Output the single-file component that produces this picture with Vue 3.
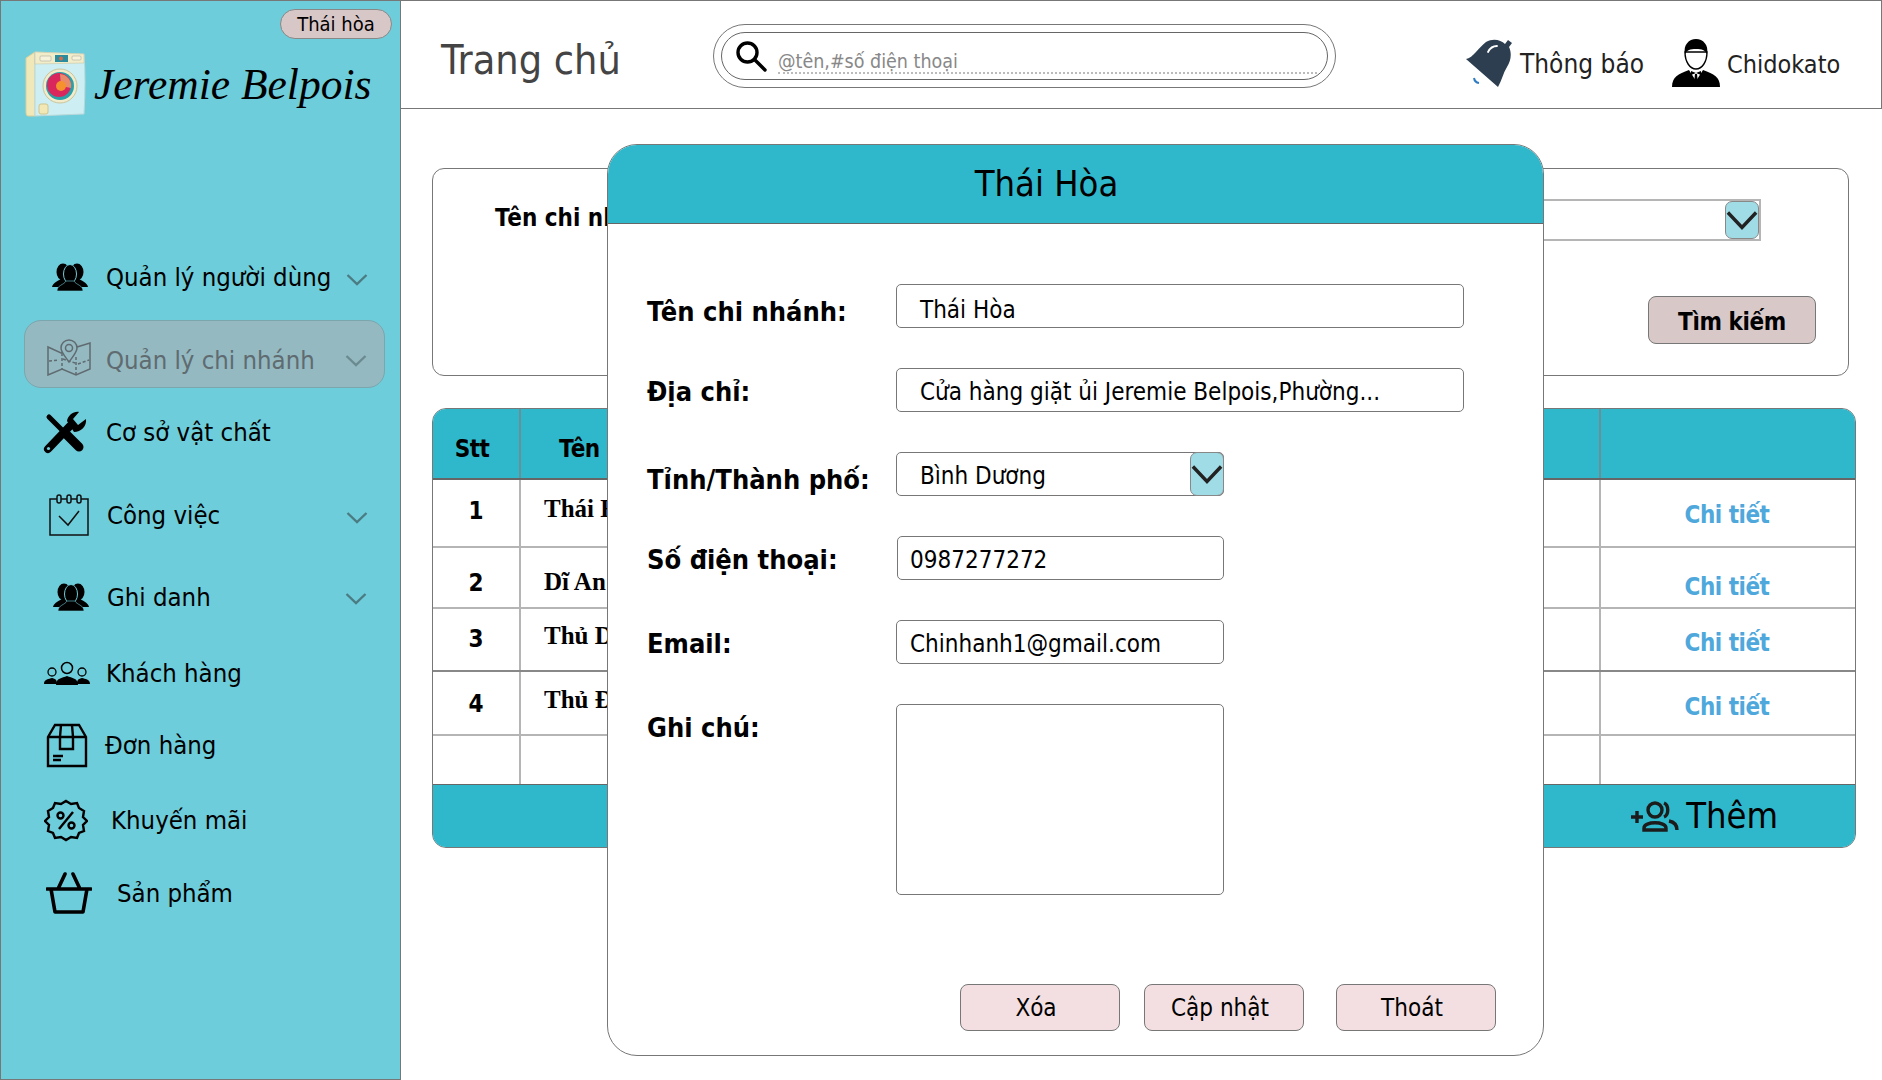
<template>
  <div class="page">
    <aside class="sidebar">
      <div class="pill-row"><span class="branch-pill">Thái hòa</span></div>
      <div class="brand">
        <svg class="washer" viewBox="0 0 62 68">
          <path d="M1 8 L10 2 L10 66 L3 66 Q1 66 1 63 Z" fill="#f0e8b8" stroke="#d8cf9c" />
          <path d="M10 2 L59 4 Q61 30 59 64 L10 66 Z" fill="#cdeef2" stroke="#b9d8da" />
          <path d="M10 2 L59 4 L59 13 L10 14 Z" fill="#f2edc8" stroke="#c8c8a8" stroke-width="0.6" />
          <rect x="30" y="5" width="13" height="7" fill="#2a8c9c" />
          <circle cx="36" cy="8.5" r="2" fill="#d86a4a" />
          <rect x="15" y="6" width="11" height="5" rx="1" fill="#f7f3da" stroke="#999" stroke-width="0.5" />
          <rect x="47" y="6" width="9" height="4" rx="1" fill="#f7f3da" stroke="#999" stroke-width="0.5" />
          <circle cx="35" cy="36" r="17" fill="#f2eccb" stroke="#c9c49c" />
          <circle cx="35" cy="36" r="14" fill="#2aa0a8" />
          <circle cx="34" cy="35" r="12" fill="#d9275e" />
          <path d="M35 24 A12 12 0 0 1 46 38 L36 36 Z" fill="#e98a6a" />
          <circle cx="36" cy="36" r="5" fill="#f5922e" />
          <rect x="14" y="54" width="9" height="10" rx="2" fill="#f2e8b6" stroke="#cfc48c" />
        </svg>
        <span class="brand-name">Jeremie Belpois</span>
      </div>

      <nav class="nav">
        <div class="nav-row row-users">
          <span class="nav-slot">
            <svg class="ic-users" viewBox="0 0 36 28">
              <ellipse cx="11" cy="9" rx="6.5" ry="8.5" />
              <ellipse cx="25" cy="9" rx="6.5" ry="8.5" />
              <path d="M0 24 C1 19 7 18 10 15 H26 C29 18 35 19 36 24 Z" />
              <ellipse cx="18" cy="11" rx="6.5" ry="9.5" stroke="#6ecdda" />
              <path d="M5 28 C5 22 12 22 14 18 H22 C24 22 31 22 31 28 Z" stroke="#6ecdda" stroke-width="0.6" />
            </svg>
          </span>
          <span class="nav-text">Quản lý người dùng</span>
          <svg class="chevron" viewBox="0 0 22 13"><path d="M1.5 2 L11 11 L20.5 2" /></svg>
        </div>

        <div class="nav-row nav-active">
          <span class="nav-slot">
            <svg class="ic-map" viewBox="0 0 44 37">
              <path d="M1 8 L14 14 L30 8 L43 4 V30 L29 36 L15 30 L1 36 Z" />
              <path d="M15 14 V30 M29 18 V36 M2 22 L12 21 M16 20 L28 24 M31 25 L42 21" stroke-dasharray="3 2" />
              <path d="M22 23 C17 16 14 13 14 9 A8 8 0 0 1 30 9 C30 13 27 16 22 23 Z" fill="#94b9c0" />
              <circle cx="22" cy="9" r="3.5" />
            </svg>
          </span>
          <span class="nav-text">Quản lý chi nhánh</span>
          <svg class="chevron" viewBox="0 0 22 13"><path d="M1.5 2 L11 11 L20.5 2" /></svg>
        </div>

        <div class="nav-row row-facility">
          <span class="nav-slot">
            <svg class="ic-tools" viewBox="0 0 44 43">
              <path d="M6 6 L36 36" stroke="#000" stroke-width="5" stroke-linecap="round" fill="none" />
              <path d="M23 23 L36 36" stroke="#000" stroke-width="9" stroke-linecap="round" fill="none" />
              <path d="M5 38 L27 15" stroke="#000" stroke-width="8" stroke-linecap="round" fill="none" />
              <path d="M24 10 C25 4 31 0 36 1 L30 8 L35 14 L43 8 C44 15 38 21 31 21 Z" fill="#000" />
              <circle cx="5.5" cy="37.5" r="1.6" fill="#6ecdda" />
            </svg>
          </span>
          <span class="nav-text">Cơ sở vật chất</span>
        </div>

        <div class="nav-row row-work">
          <span class="nav-slot">
            <svg class="ic-calendar" viewBox="0 0 40 42">
              <path d="M1 5 H39 V41 H1 Z" />
              <rect x="8" y="1" width="4" height="8" rx="2" fill="#6ecdda" />
              <rect x="18" y="1" width="4" height="8" rx="2" fill="#6ecdda" />
              <rect x="28" y="1" width="4" height="8" rx="2" fill="#6ecdda" />
              <path d="M10 22 L19 31 L30 17" />
            </svg>
          </span>
          <span class="nav-text text-work">Công việc</span>
          <svg class="chevron" viewBox="0 0 22 13"><path d="M1.5 2 L11 11 L20.5 2" /></svg>
        </div>

        <div class="nav-row row-enroll">
          <span class="nav-slot">
            <svg class="ic-users ic-enroll" viewBox="0 0 36 28">
              <ellipse cx="11" cy="9" rx="6.5" ry="8.5" />
              <ellipse cx="25" cy="9" rx="6.5" ry="8.5" />
              <path d="M0 24 C1 19 7 18 10 15 H26 C29 18 35 19 36 24 Z" />
              <ellipse cx="18" cy="11" rx="6.5" ry="9.5" stroke="#6ecdda" />
              <path d="M5 28 C5 22 12 22 14 18 H22 C24 22 31 22 31 28 Z" stroke="#6ecdda" stroke-width="0.6" />
            </svg>
          </span>
          <span class="nav-text text-work">Ghi danh</span>
          <svg class="chevron chevron-enroll" viewBox="0 0 22 13"><path d="M1.5 2 L11 11 L20.5 2" /></svg>
        </div>

        <div class="nav-row row-customers">
          <span class="nav-slot">
            <svg class="ic-customers" viewBox="0 0 46 25">
              <circle cx="8" cy="11" r="4" fill="none" stroke="#000" stroke-width="1.3" />
              <circle cx="38" cy="11" r="4" fill="none" stroke="#000" stroke-width="1.3" />
              <circle cx="23" cy="7" r="5.5" fill="none" stroke="#000" stroke-width="1.5" />
              <path d="M0 23 C0 18 5 18 8 17 C11 18 13 18 13 23 Z" />
              <path d="M46 23 C46 18 41 18 38 17 C35 18 33 18 33 23 Z" />
              <path d="M12 24 C12 17 18 17 23 15 C28 17 34 17 34 24 Z" />
            </svg>
          </span>
          <span class="nav-text">Khách hàng</span>
        </div>

        <div class="nav-row row-orders">
          <span class="nav-slot">
            <svg class="ic-box" viewBox="0 0 42 45">
              <path d="M2 14 L9 2 H33 L40 14 V43 H2 Z M2 14 H40" />
              <path d="M15 2 L14 14 V26 H27 V14 L26 2" />
              <path d="M7 33 H17 M7 37 H15" />
            </svg>
          </span>
          <span class="nav-text text-orders">Đơn hàng</span>
        </div>

        <div class="nav-row row-promo">
          <span class="nav-slot">
            <svg class="ic-promo" viewBox="0 0 44 43">
              <path d="M22 2 L27 5 L33 4 L35 9 L40 12 L39 18 L43 22 L39 26 L40 32 L35 34 L33 39 L27 38 L22 41 L17 38 L11 39 L9 34 L4 32 L5 26 L1 22 L5 18 L4 12 L9 9 L11 4 L17 5 Z" />
              <circle cx="16.5" cy="16.5" r="3" />
              <circle cx="27.5" cy="26.5" r="3" />
              <path d="M29 13 L15 30" />
            </svg>
          </span>
          <span class="nav-text text-promo">Khuyến mãi</span>
        </div>

        <div class="nav-row row-products">
          <span class="nav-slot">
            <svg class="ic-basket" viewBox="0 0 46 42">
              <path d="M1 17 H45 M5 17 L9 40 H37 L41 17 M12 17 L19 2 M34 17 L27 2" />
            </svg>
          </span>
          <span class="nav-text text-products">Sản phẩm</span>
        </div>
      </nav>
    </aside>

    <div class="main">
      <header class="topbar">
        <h1 class="page-title">Trang chủ</h1>
        <div class="search-outer">
          <div class="search-inner">
            <svg class="search-icon" viewBox="0 0 32 32">
              <circle cx="12.5" cy="12.5" r="9.5" />
              <path d="M19.5 19.5 L30 30" />
            </svg>
            <span class="search-text">@tên,#số điện thoại</span>
          </div>
        </div>
        <div class="top-actions">
          <svg class="bell" viewBox="0 0 46 48">
            <path d="M8 39 A6 6 0 0 0 13 44" fill="none" stroke="#2e7cc4" stroke-width="2" />
            <path d="M0 20 C7 19 13 8 20 3 C27 -1 35 1 39 5 L42 1 L46 4 L43 8 C46 14 45 22 41 28 C37 34 36 41 32 48 Z" fill="#2c3e50" />
            <path d="M22 13 C24 9 27 7 31 7" fill="none" stroke="#fff" stroke-width="1.8" stroke-linecap="round" />
          </svg>
          <span class="top-label label-bell">Thông báo</span>
          <svg class="person" viewBox="0 0 48 48">
            <path d="M0 48 C0 38 6 35 17 31 L31 31 C42 35 48 38 48 48 Z" fill="#000" />
            <path d="M17 31 L24 42 L31 31 L28 27 H20 Z" fill="#fff" />
            <path d="M19 32 L24 34 L29 32 V36 L24 34 L19 36 Z" fill="#000" />
            <path d="M23 35 H25 L26 44 H22 Z" fill="#000" />
            <path d="M13 13 C13 23 18 30 24 30 C30 30 35 23 35 13 Z" fill="#fff" stroke="#000" stroke-width="1.4" />
            <path d="M13 15 C11 6 17 0 24 0 C31 0 37 6 35 15 C33 11 30 10 24 10 C18 10 15 11 13 15 Z" fill="#000" />
          </svg>
          <span class="top-label label-user">Chidokato</span>
        </div>
      </header>

      <section class="filter-panel">
        <span class="filter-label">Tên chi nhánh</span>
        <div class="filter-side">
          <div class="filter-select">
            <span class="drop-btn">
              <svg viewBox="0 0 34 24"><path d="M2 4 L17 20 L32 4" /></svg>
            </span>
          </div>
          <button class="search-btn" type="button">Tìm kiếm</button>
        </div>
      </section>

      <section class="table-card">
        <div class="tr th-row">
          <div class="td td-stt">Stt</div>
          <div class="td td-name head-name">Tên chi nhánh</div>
          <div class="td td-action"></div>
        </div>
        <div v-for="row in branches" :key="row.stt" class="tr" :class="row.cls">
          <div class="td td-stt">{{ row.stt }}</div>
          <div class="td td-name"><span class="branch-name">{{ row.name }}</span></div>
          <div class="td td-action"><a class="detail-link">Chi tiết</a></div>
        </div>
        <div class="tr row-empty">
          <div class="td td-stt"></div>
          <div class="td td-name"></div>
          <div class="td td-action"></div>
        </div>
        <div class="table-foot">
          <svg class="add-icon" viewBox="0 0 48 32">
            <path d="M0 17 H12 M6 11 V23" />
            <circle cx="24" cy="10" r="7" />
            <path d="M33 3 C38 5 38 15 33 17" />
            <path d="M13 30 V28 C13 21 35 21 35 28 V30 Z" />
            <path d="M38 21 C43 22 46 25 46 30" />
          </svg>
          <span class="add-text">Thêm</span>
        </div>
      </section>
    </div>

    <div class="modal">
      <div class="modal-head">Thái Hòa</div>
      <div class="modal-body">
        <div class="form-row">
          <label class="label-low">Tên chi nhánh:</label>
          <div class="field field-wide pad-lg text-low">Thái Hòa</div>
        </div>
        <div class="form-row">
          <label>Địa chỉ:</label>
          <div class="field field-wide pad-lg">Cửa hàng giặt ủi Jeremie Belpois,Phường...</div>
        </div>
        <div class="form-row">
          <label class="label-low">Tỉnh/Thành phố:</label>
          <div class="field pad-lg field-select">
            Bình Dương
            <span class="drop-btn drop-form">
              <svg viewBox="0 0 34 24"><path d="M2 4 L17 20 L32 4" /></svg>
            </span>
          </div>
        </div>
        <div class="form-row">
          <label>Số điện thoại:</label>
          <div class="field field-phone">0987277272</div>
        </div>
        <div class="form-row">
          <label>Email:</label>
          <div class="field">Chinhanh1@gmail.com</div>
        </div>
        <div class="form-row">
          <label>Ghi chú:</label>
          <div class="field field-note"></div>
        </div>
      </div>
      <div class="modal-actions">
        <button type="button">Xóa</button>
        <button type="button">Cập nhật</button>
        <button type="button" class="btn-exit">Thoát</button>
      </div>
    </div>
  </div>
</template>

<script setup>
const branches = [
  { stt: 1, name: 'Thái Hòa', cls: 'row-1' },
  { stt: 2, name: 'Dĩ An', cls: 'row-2' },
  { stt: 3, name: 'Thủ Dầu Một', cls: 'row-3' },
  { stt: 4, name: 'Thủ Đức', cls: 'row-4' }
];
</script>

<style>
html,
body {
  margin: 0;
  background: #fff;
}
</style>

<style scoped>
.page {
  position: relative;
  width: 1882px;
  height: 1080px;
  display: flex;
  overflow: hidden;
  background: #fff;
  color: #000;
  font-family: "DejaVu Sans", Verdana, sans-serif;
  font-stretch: condensed;
  font-size: 24px;
}

/* sidebar */
.sidebar {
  width: 401px;
  flex: none;
  box-sizing: border-box;
  background: #6ecdda;
  border: 1px solid #777;
}

.pill-row {
  display: flex;
  justify-content: flex-end;
  padding: 8px 8px 0 0;
}

.branch-pill {
  width: 112px;
  height: 30px;
  box-sizing: border-box;
  background: #d8c7c7;
  border: 1px solid #888;
  border-radius: 15px;
  font-size: 20px;
  line-height: 28px;
  text-align: center;
}

.brand {
  display: flex;
  align-items: center;
  height: 68px;
  margin-top: 11px;
  padding-left: 24px;
}

.washer {
  width: 62px;
  height: 68px;
  flex: none;
}

.brand-name {
  margin-left: 7px;
  font-family: "Liberation Serif", serif;
  font-style: italic;
  font-stretch: normal;
  font-size: 43.5px;
  line-height: 68px;
  white-space: nowrap;
}

.nav {
  margin-top: 129px;
}

.nav-row {
  display: flex;
  align-items: center;
  height: 60px;
  padding-right: 32px;
  white-space: nowrap;
}

.nav-slot {
  width: 105px;
  flex: none;
  display: flex;
}

.nav-text {
  margin-top: 1px;
  font-size: 25.5px;
  line-height: 1;
}

.chevron {
  width: 22px;
  height: 13px;
  margin-top: 4px;
  margin-left: auto;
  fill: none;
  stroke: #4b7c84;
  stroke-width: 2.4;
}

.chevron-enroll {
  margin-top: 2px;
  margin-right: 1px;
}

.nav-active {
  height: 68px;
  box-sizing: border-box;
  margin: 13px 15px 0 23px;
  padding-right: 17px;
  background: #94b9c0;
  border: 1px solid #7ba6ae;
  border-radius: 17px;
  color: #5f6b70;
}

.nav-active .nav-slot {
  width: 81px;
  padding-top: 6px;
}

.nav-active .nav-text {
  margin-top: 14px;
}

.nav-active .chevron {
  margin-top: 12px;
  stroke: #6b8b90;
}

.row-facility { margin-top: 14px; }
.row-work { margin-top: 23px; }
.row-enroll { margin-top: 22px; }
.row-customers { margin-top: 16px; }
.row-orders { margin-top: 12px; }
.row-promo { margin-top: 15px; }
.row-products { margin-top: 13px; }

.text-work { margin-left: 1px; }
.text-orders { margin-left: -1px; }
.text-promo { margin-left: 5px; }
.text-products { margin-left: 11px; }

.ic-users {
  width: 36px;
  height: 28px;
  margin-left: 51px;
  fill: #000;
}

.ic-enroll {
  margin-left: 52px;
}

.ic-map {
  width: 44px;
  height: 37px;
  margin-left: 22px;
  fill: none;
  stroke: #5f6b70;
  stroke-width: 1.5;
}

.ic-tools {
  width: 44px;
  height: 43px;
  margin-left: 42px;
}

.ic-calendar {
  width: 40px;
  height: 42px;
  margin-left: 48px;
  fill: none;
  stroke: #111;
  stroke-width: 1.5;
}

.ic-customers {
  width: 46px;
  height: 25px;
  margin-left: 43px;
  fill: #000;
}

.ic-box {
  width: 42px;
  height: 45px;
  margin-left: 45px;
  fill: none;
  stroke: #000;
  stroke-width: 2.4;
}

.ic-promo {
  width: 44px;
  height: 43px;
  margin-left: 43px;
  fill: none;
  stroke: #000;
  stroke-width: 2.4;
}

.ic-basket {
  width: 46px;
  height: 42px;
  margin-left: 45px;
  fill: none;
  stroke: #000;
  stroke-width: 3.6;
  stroke-linecap: round;
  stroke-linejoin: round;
}

/* main */
.main {
  flex: 1;
  min-width: 0;
  display: flex;
  flex-direction: column;
}

.topbar {
  height: 109px;
  box-sizing: border-box;
  display: flex;
  align-items: center;
  padding-left: 40px;
  border: 1px solid #777;
  border-left: none;
}

.page-title {
  width: 272px;
  flex: none;
  margin: 12px 0 0;
  color: #444;
  font-size: 41px;
  font-weight: 400;
  line-height: 1;
}

.search-outer {
  width: 623px;
  height: 64px;
  flex: none;
  box-sizing: border-box;
  padding: 7px;
  margin-top: 3px;
  border: 1px solid #777;
  border-radius: 32px;
}

.search-inner {
  height: 48px;
  box-sizing: border-box;
  display: flex;
  align-items: flex-start;
  padding: 7px 10px 0 13px;
  border: 1px solid #666;
  border-radius: 24px;
}

.search-icon {
  width: 32px;
  height: 32px;
  flex: none;
  fill: none;
  stroke: #000;
  stroke-width: 3.4;
  stroke-linecap: round;
}

.search-text {
  flex: 1;
  height: 32px;
  margin-left: 11px;
  color: #888;
  font-size: 19.5px;
  line-height: 43px;
  border-bottom: 2px dotted #bbb;
}

.top-actions {
  display: flex;
  align-items: center;
  margin-top: 16px;
  margin-left: 130px;
}

.bell {
  width: 46px;
  height: 48px;
}

.top-label {
  margin-left: 8px;
  margin-top: 3px;
  color: #222;
  font-size: 26px;
}

.label-bell {
  margin-right: 28px;
}

.label-user {
  margin-left: 7px;
  font-size: 25px;
}

.person {
  width: 48px;
  height: 48px;
}

.filter-panel {
  width: 1417px;
  height: 208px;
  box-sizing: border-box;
  display: flex;
  justify-content: space-between;
  margin: 59px 0 0 31px;
  border: 1px solid #777;
  border-radius: 12px;
}

.filter-label {
  margin: 34px 0 0 62px;
  font-weight: 700;
  line-height: 30px;
  white-space: nowrap;
}

.filter-side {
  display: flex;
  flex-direction: column;
  align-items: flex-end;
  width: 400px;
  padding: 30px 32px 0 0;
}

.filter-select {
  width: 300px;
  height: 42px;
  box-sizing: border-box;
  display: flex;
  justify-content: flex-end;
  margin-right: 55px;
  border: 2px solid #b5b5b5;
  border-left: none;
}

.drop-btn {
  width: 34px;
  flex: none;
  box-sizing: border-box;
  display: flex;
  align-items: center;
  background: #a0dce6;
  border: 1px solid #888;
  border-radius: 7px;
}

.drop-btn svg {
  width: 32px;
  height: 24px;
  fill: none;
  stroke: #222;
  stroke-width: 3.6;
}

.search-btn {
  width: 168px;
  height: 48px;
  margin-top: 55px;
  padding: 4px 0 0;
  background: #d9c8c8;
  border: 1px solid #777;
  border-radius: 8px;
  color: #000;
  font: inherit;
  font-weight: 700;
  letter-spacing: -0.4px;
}

.table-card {
  width: 1424px;
  height: 440px;
  box-sizing: border-box;
  display: flex;
  flex-direction: column;
  margin: 32px 0 0 31px;
  overflow: hidden;
  border: 1px solid #777;
  border-radius: 14px;
}

.tr {
  display: grid;
  grid-template-columns: 86px 1fr 256px;
  flex: none;
  box-sizing: border-box;
  border-bottom: 2px solid #b5b5b5;
}

.td {
  display: flex;
  align-items: center;
  justify-content: center;
  font-weight: 700;
}

.td + .td {
  border-left: 2px solid #b5b5b5;
}

.td-name {
  justify-content: flex-start;
  padding-left: 23px;
}

.th-row {
  height: 71px;
  background: #2fb8cb;
  border-bottom-color: #666;
}

.th-row .td {
  padding-top: 10px;
  letter-spacing: -0.6px;
}

.th-row .td + .td {
  border-left-color: #6a8f96;
}

.th-row .td-stt {
  padding-right: 8px;
}

.head-name {
  padding-left: 38px;
}

.row-1 { height: 68px; }
.row-2 { height: 61px; }
.row-3 { height: 63px; border-bottom-color: #888; }
.row-4 { height: 64px; }
.row-empty { height: 48px; border-bottom: none; }

.row-1 .td { padding-bottom: 4px; }
.row-2 .td { padding-top: 10px; }
.row-3 .td { padding-bottom: 2px; }
.row-4 .td { padding-top: 2px; }

.row-1 .branch-name { margin-bottom: 4px; }
.row-2 .branch-name { margin-bottom: 2px; }
.row-3 .branch-name { margin-bottom: 6px; }
.row-4 .branch-name { margin-bottom: 8px; }

.row-4 .detail-link { margin-top: 6px; }

.branch-name {
  font-family: "Liberation Serif", serif;
  font-stretch: normal;
  font-size: 25px;
}

.detail-link {
  margin-top: 8px;
  color: #4fa8dc;
  letter-spacing: -0.5px;
}

.td-action {
  padding-right: 2px;
}

.table-foot {
  flex: 1;
  display: flex;
  align-items: center;
  justify-content: flex-end;
  padding-right: 77px;
  background: #2fb8cb;
  border-top: 1px solid #666;
}

.add-icon {
  width: 48px;
  height: 32px;
  fill: none;
  stroke: #1c1c1c;
  stroke-width: 3.4;
}

.add-text {
  margin-left: 7px;
  font-size: 36px;
  line-height: 1;
}

/* modal */
.modal {
  position: absolute;
  left: 607px;
  top: 144px;
  width: 937px;
  height: 912px;
  box-sizing: border-box;
  display: flex;
  flex-direction: column;
  overflow: hidden;
  background: #fff;
  border: 1px solid #777;
  border-radius: 30px;
}

.modal-head {
  height: 79px;
  flex: none;
  box-sizing: border-box;
  background: #2fb8cb;
  border-bottom: 1px solid #666;
  padding-right: 58px;
  font-size: 36px;
  line-height: 78px;
  text-align: center;
}

.modal-body {
  display: flex;
  flex-direction: column;
  gap: 40px;
  padding: 60px 0 0 39px;
}

.form-row {
  display: flex;
  align-items: flex-start;
}

.form-row label {
  width: 249px;
  height: 44px;
  flex: none;
  font-size: 27px;
  font-weight: 700;
  line-height: 48px;
  white-space: nowrap;
}

.form-row .label-low {
  line-height: 55px;
}

.field {
  position: relative;
  width: 328px;
  height: 44px;
  box-sizing: border-box;
  padding-left: 13px;
  background: #fff;
  border: 1px solid #777;
  border-radius: 5px;
  line-height: 46px;
  white-space: nowrap;
}

.field-wide {
  width: 568px;
}

.field-phone {
  width: 327px;
  margin-left: 1px;
  padding-left: 12px;
}

.pad-lg {
  padding-left: 23px;
}

.text-low {
  line-height: 50px;
}

.field-select {
  display: flex;
  justify-content: space-between;
}

.drop-form {
  margin: -1px -1px -1px 0;
}

.field-note {
  height: 191px;
}

.modal-actions {
  display: flex;
  gap: 24px;
  justify-content: flex-end;
  margin-top: auto;
  padding: 0 47px 24px 0;
}

.modal-actions button {
  width: 160px;
  height: 47px;
  padding: 0 8px 0 0;
  background: #f3dfe1;
  border: 1px solid #777;
  border-radius: 8px;
  color: #000;
  font: inherit;
}

.modal-actions .btn-exit {
  margin-left: 8px;
}
</style>
